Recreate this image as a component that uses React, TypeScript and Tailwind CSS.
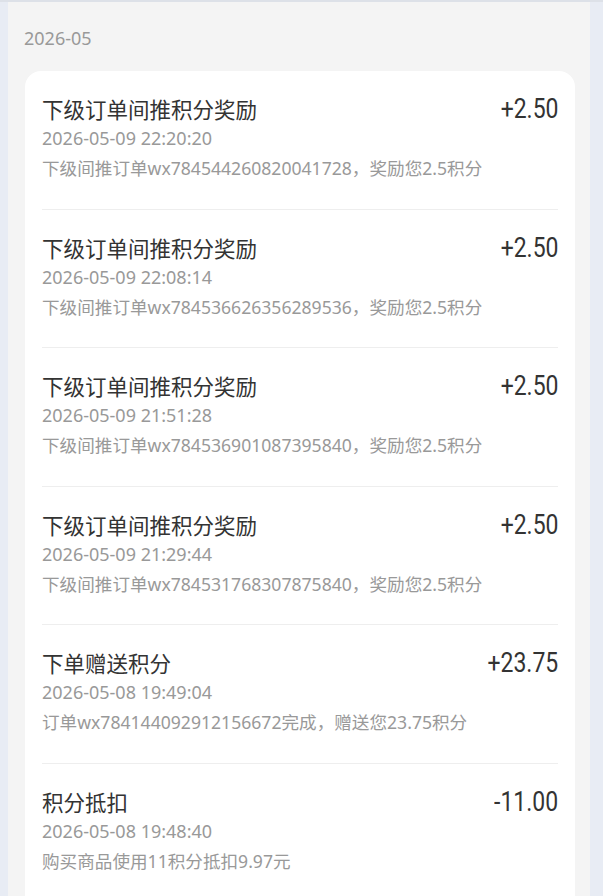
import React from 'react';

interface PointRecord {
  title: string;
  time: string;
  desc: string;
  amount: string;
}

const records: PointRecord[] = [
  { title: '下级订单间推积分奖励', time: '2026-05-09 22:20:20', desc: '下级间推订单wx784544260820041728，奖励您2.5积分', amount: '+2.50' },
  { title: '下级订单间推积分奖励', time: '2026-05-09 22:08:14', desc: '下级间推订单wx784536626356289536，奖励您2.5积分', amount: '+2.50' },
  { title: '下级订单间推积分奖励', time: '2026-05-09 21:51:28', desc: '下级间推订单wx784536901087395840，奖励您2.5积分', amount: '+2.50' },
  { title: '下级订单间推积分奖励', time: '2026-05-09 21:29:44', desc: '下级间推订单wx784531768307875840，奖励您2.5积分', amount: '+2.50' },
  { title: '下单赠送积分', time: '2026-05-08 19:49:04', desc: '订单wx784144092912156672完成，赠送您23.75积分', amount: '+23.75' },
  { title: '积分抵扣', time: '2026-05-08 19:48:40', desc: '购买商品使用11积分抵扣9.97元', amount: '-11.00' },
];

const cjk = { fontFamily: '"Noto Sans", "Noto Sans CJK SC", sans-serif' };
const num = { fontFamily: 'Roboto, "Noto Sans", sans-serif' };

export default function App() {
  return (
    <div className="min-h-[896px] bg-[#e8ecf4] border-t-2 border-[#dde1e8] overflow-hidden" style={cjk}>
      <div className="ml-[8px] w-[582px] min-h-[894px] bg-[#f4f4f4] pt-[21px]">
        <div className="pl-[16px] text-[18px] leading-[30px] text-[#999999]">2026-05</div>
        <div className="mt-[18px] ml-[17px] w-[550px] bg-white rounded-t-[16px] px-[17px]">
          {records.map((r, i) => (
            <div key={i} className="flex justify-between border-b border-[#eeeeee] pt-[23px] pb-[24.6px]">
              <div className="flex flex-col">
                <div className="text-[21.5px] leading-[30px] text-[#333333]" style={{ fontFamily: '"Noto Sans CJK SC", sans-serif' }}>{r.title}</div>
                <div className="text-[18px] leading-[28px] text-[#999999]">{r.time}</div>
                <div className="text-[17.6px] leading-[32px] text-[#999999]">{r.desc}</div>
              </div>
              <div className="text-[28px] leading-[30px] text-[#333333] scale-x-[0.82] origin-right" style={num}>{r.amount}</div>
            </div>
          ))}
        </div>
      </div>
    </div>
  );
}
